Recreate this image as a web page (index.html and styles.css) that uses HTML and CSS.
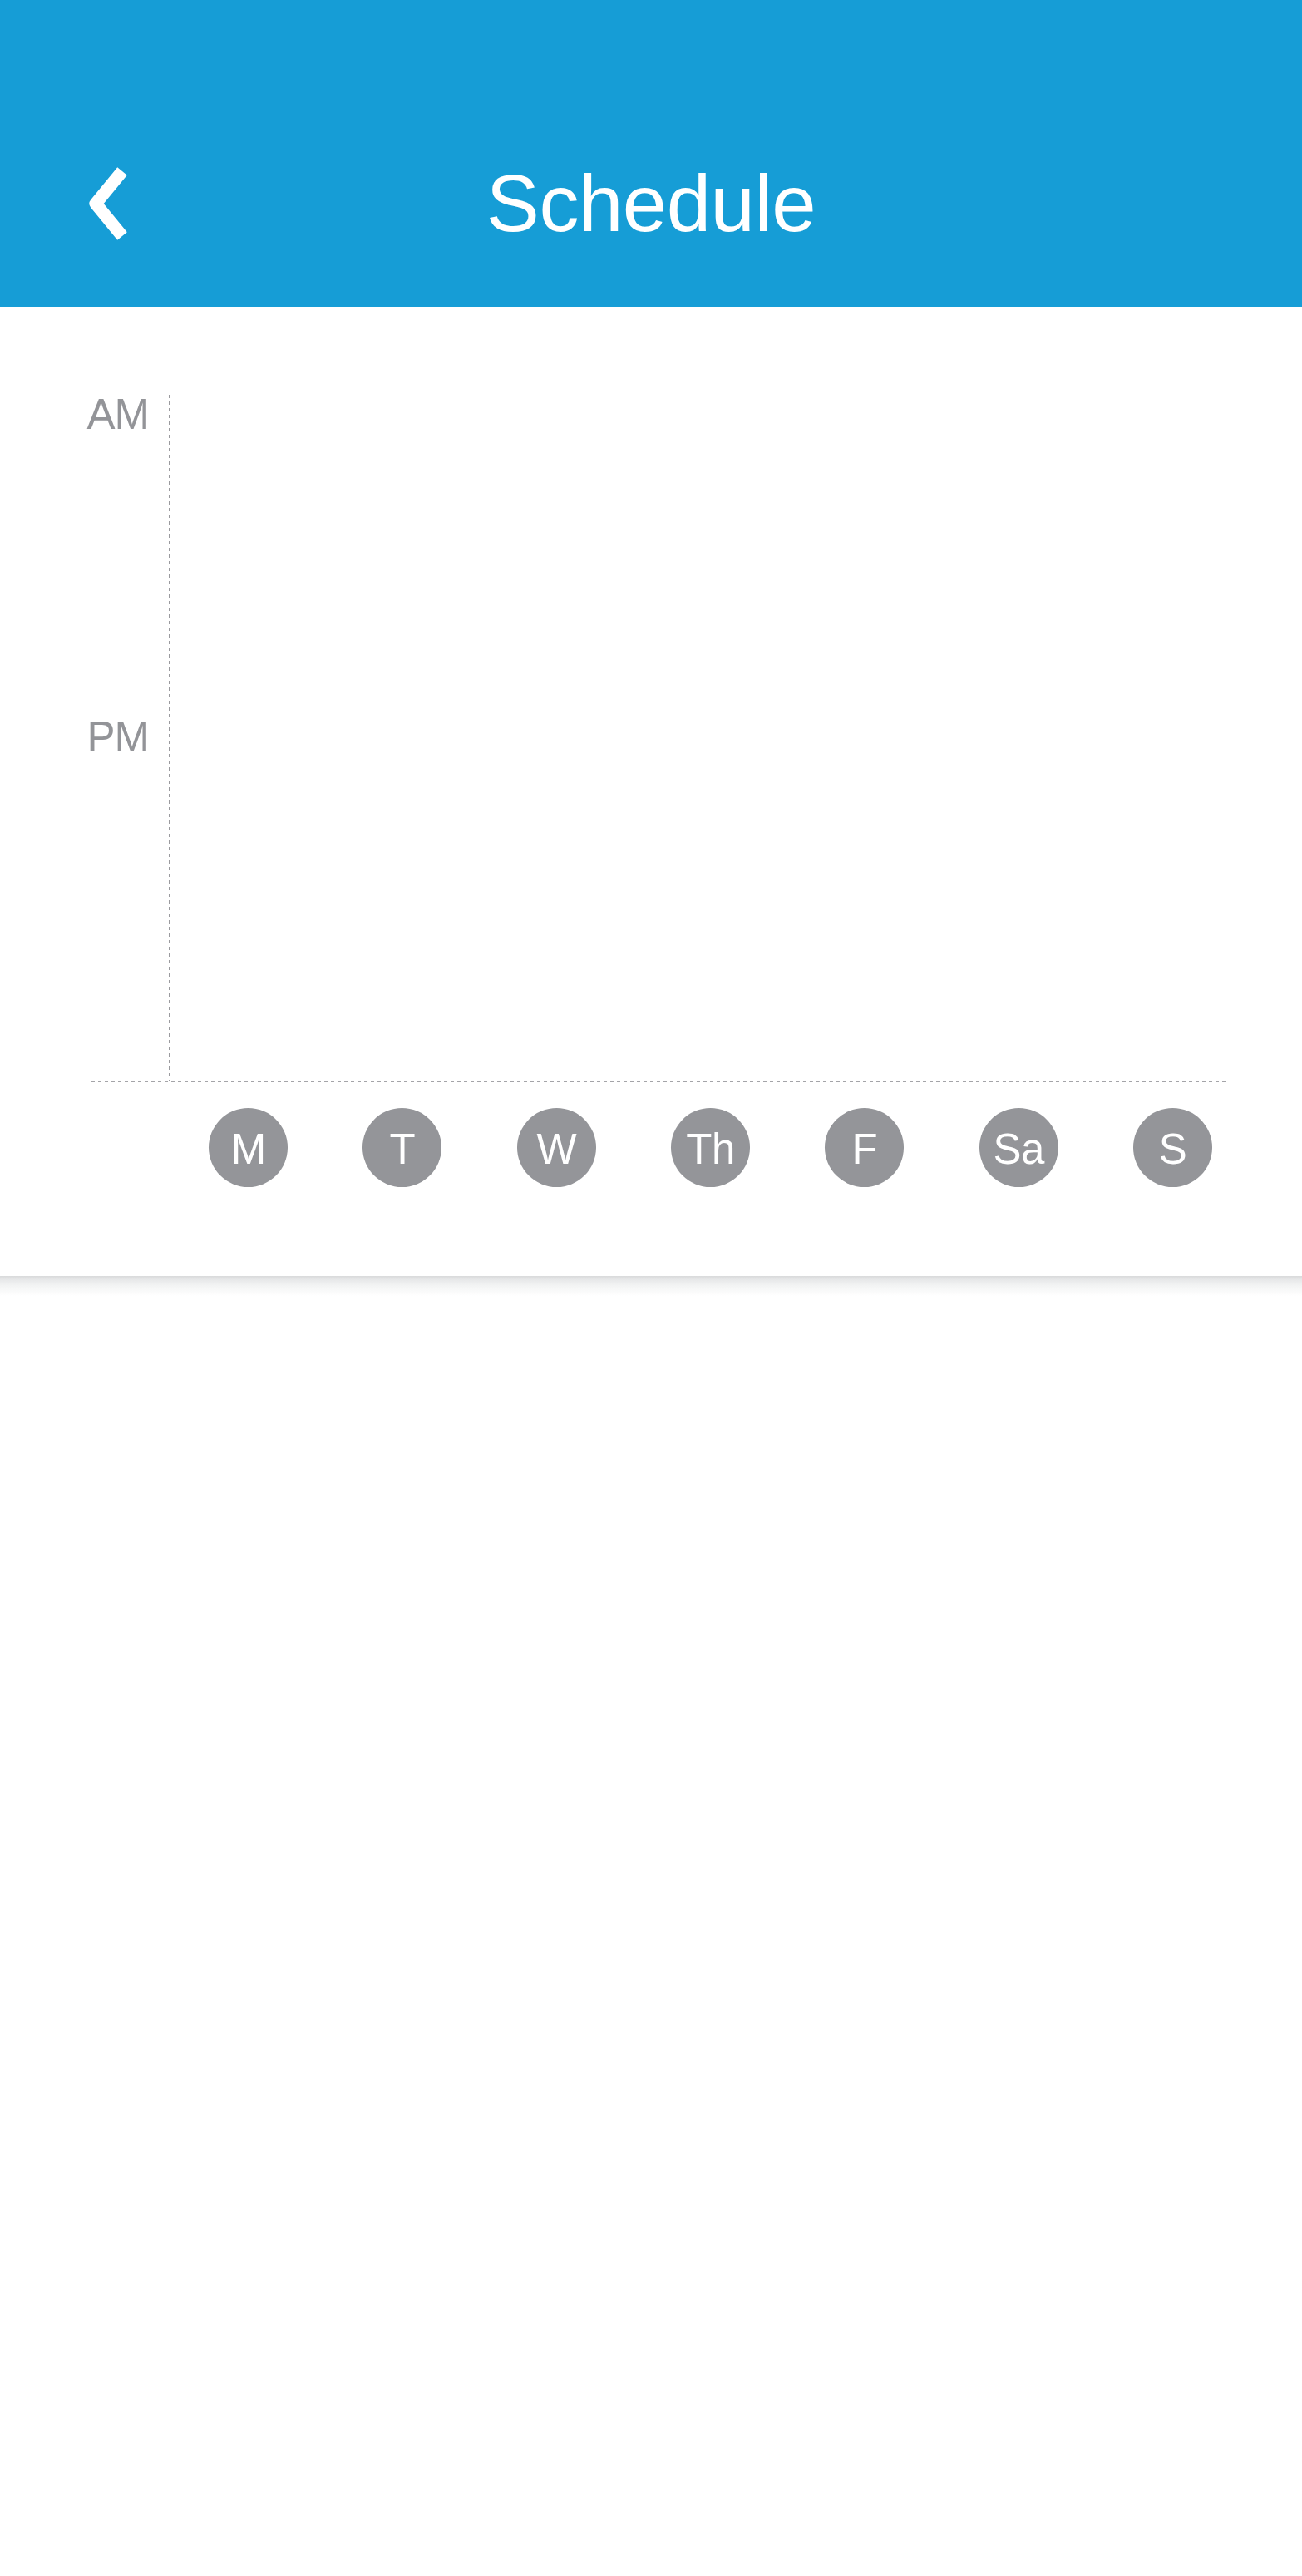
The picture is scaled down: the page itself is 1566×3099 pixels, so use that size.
FILE: index.html
```html
<!DOCTYPE html>
<html lang="en">
<head>
<meta charset="utf-8">
<title>Schedule</title>
<link rel="stylesheet" href="styles.css">
</head>
<body>
<header class="header">
  <div class="nav">
    <div class="nav-left">
      <button class="back" aria-label="Back">
        <svg width="50" height="88" viewBox="0 0 50 88">
          <polyline points="44,5 12,44 44,83" fill="none" stroke="#ffffff" stroke-width="15" stroke-linejoin="round" stroke-linecap="butt"/>
        </svg>
      </button>
    </div>
    <h1 class="title">Schedule</h1>
    <div class="nav-right"></div>
  </div>
</header>
<main class="card">
  <div class="chart">
    <div class="plot-row">
      <div class="axis">
        <span class="axis-label">AM</span>
        <span class="axis-label">PM</span>
      </div>
      <div class="vline"></div>
      <div class="plot"></div>
    </div>
    <div class="hline"></div>
    <div class="days">
      <div class="day"><span class="dot">M</span></div>
      <div class="day"><span class="dot">T</span></div>
      <div class="day"><span class="dot">W</span></div>
      <div class="day"><span class="dot">Th</span></div>
      <div class="day"><span class="dot">F</span></div>
      <div class="day"><span class="dot">Sa</span></div>
      <div class="day"><span class="dot">S</span></div>
    </div>
  </div>
</main>
<div class="card-shadow"></div>
</body>
</html>
```
FILE: styles.css
```css
html, body {
  margin: 0;
  padding: 0;
  background: #ffffff;
  font-family: "Liberation Sans", Arial, sans-serif;
}

.header {
  height: 369px;
  box-sizing: border-box;
  background: #169dd6;
  padding-top: 183px;
}

.nav {
  display: grid;
  grid-template-columns: 1fr auto 1fr;
  align-items: center;
  height: 124px;
}

.nav-left {
  padding-left: 103px;
  display: flex;
  align-items: center;
}

.back {
  border: 0;
  background: none;
  padding: 0;
  margin: 0;
  display: block;
  line-height: 0;
  cursor: pointer;
}

.title {
  margin: 0;
  color: #ffffff;
  font-weight: normal;
  font-size: 96px;
  line-height: 124px;
  letter-spacing: -0.5px;
}

.card {
  background: #ffffff;
  padding-top: 106px;
  padding-bottom: 107px;
}

.card-shadow {
  height: 24px;
  background: linear-gradient(to bottom, #d9dadb 0, #e8e9ea 5px, #f3f4f4 12px, #ffffff 24px);
}

.chart {
  margin-left: 110px;
  width: 1368px;
}

.plot-row {
  display: flex;
  height: 825px;
}

.axis {
  width: 93px;
  box-sizing: border-box;
  padding-right: 24px;
  display: flex;
  flex-direction: column;
  align-items: flex-end;
  gap: 337px;
  margin-top: -2px;
}

.axis-label {
  display: block;
  font-size: 51px;
  line-height: 51px;
  color: #939498;
  letter-spacing: -1px;
}

.vline {
  width: 2px;
  background: repeating-linear-gradient(to bottom, #9a9a9e 0 4px, transparent 4px 8px);
}

.plot {
  flex: 1;
}

.hline {
  height: 2px;
  background: repeating-linear-gradient(to right, #a4a4a8 0 4px, transparent 4px 8px);
}

.days {
  display: grid;
  grid-template-columns: repeat(7, 185.3px);
  margin-left: 96px;
  margin-top: 31px;
}

.day {
  display: flex;
  justify-content: center;
}

.dot {
  width: 95px;
  height: 95px;
  border-radius: 50%;
  background: #949599;
  color: #ffffff;
  font-size: 51px;
  line-height: 95px;
  text-align: center;
  display: flex;
  align-items: center;
  justify-content: center;
  padding-top: 4px;
  box-sizing: border-box;
  letter-spacing: -0.5px;
}
```
